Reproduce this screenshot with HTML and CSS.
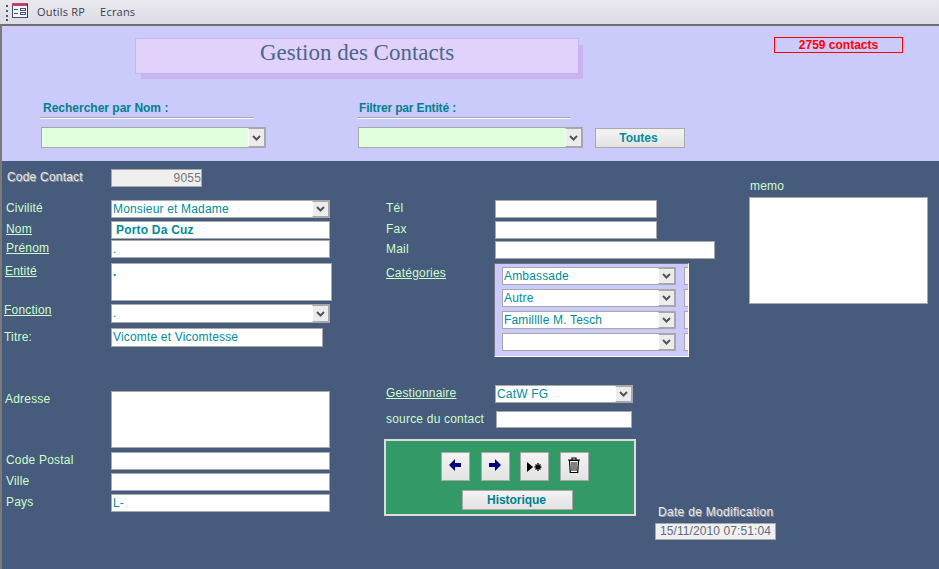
FILE: index.html
```html
<!DOCTYPE html>
<html lang="fr">
<head>
<meta charset="utf-8">
<title>Gestion des Contacts</title>
<link rel="stylesheet" href="styles.css">
</head>
<body>
<div class="menubar">
  <svg class="grip" width="3" height="17" viewBox="0 0 3 17"><rect x="0" y="1" width="2" height="2" fill="#555"/><rect x="0" y="6" width="2" height="2" fill="#555"/><rect x="0" y="11" width="2" height="2" fill="#555"/><rect x="0" y="15" width="2" height="2" fill="#555"/></svg>
  <svg class="formicon" width="16" height="15" viewBox="0 0 16 15"><rect x="0.500" y="0.500" width="15" height="14" fill="#f4f6fb" stroke="#3c4f78"/><rect x="0" y="0" width="16" height="3" fill="#c0406e"/><rect x="2" y="6" width="4" height="1" fill="#44557c"/><rect x="2" y="10" width="4" height="1" fill="#44557c"/><rect x="8.500" y="5.500" width="5" height="2" fill="#fff" stroke="#44557c"/><rect x="8.500" y="9.500" width="5" height="2" fill="#fff" stroke="#44557c"/><rect x="15" y="1" width="1" height="14" fill="#2c3a5c"/></svg>
  <span class="menu-item first">Outils RP</span>
  <span class="menu-item">Ecrans</span>
</div>
<main class="form">
  <header class="head">
    <div class="head-top">
      <div class="title">Gestion des Contacts</div>
      <div class="counter">2759 contacts</div>
    </div>
    <div class="search-row">
      <div class="search">
        <div class="search-label">Rechercher par Nom :</div>
        <div class="rule"></div>
        <div class="combo green w225"><span class="val"></span><span class="arrow"><svg width="9" height="6" viewBox="0 0 9 6"><path d="M1 1l3.500 3.500L8 1" fill="none" stroke="#555" stroke-width="2"/></svg></span></div>
      </div>
      <div class="search">
        <div class="search-label tight">Filtrer par Entité :</div>
        <div class="rule"></div>
        <div class="search-line">
          <div class="combo green w225"><span class="val"></span><span class="arrow"><svg width="9" height="6" viewBox="0 0 9 6"><path d="M1 1l3.500 3.500L8 1" fill="none" stroke="#555" stroke-width="2"/></svg></span></div>
          <div class="btn toutes">Toutes</div>
        </div>
      </div>
    </div>
  </header>
  <section class="body">
    <div class="col-left">
      <div class="field"><span class="lab engr p5">Code Contact</span><div class="box locked w91 h18">9055</div></div>
      <div class="field mt13"><span class="lab p4">Civilité</span><div class="combo w219 h18"><span class="val">Monsieur et Madame</span><span class="arrow"><svg width="9" height="6" viewBox="0 0 9 6"><path d="M1 1l3.500 3.500L8 1" fill="none" stroke="#555" stroke-width="2"/></svg></span></div></div>
      <div class="field mt3"><span class="lab link p4">Nom</span><div class="box strong w219 h18">Porto Da Cuz</div></div>
      <div class="field mt1"><span class="lab link p4">Prénom</span><div class="box w219 h18">.</div></div>
      <div class="field mt5"><span class="lab link p3">Entité</span><div class="box dot w221 h38">.</div></div>
      <div class="field mt3"><span class="lab link p2 up2">Fonction</span><div class="combo w219 h19"><span class="val">.</span><span class="arrow"><svg width="9" height="6" viewBox="0 0 9 6"><path d="M1 1l3.500 3.500L8 1" fill="none" stroke="#555" stroke-width="2"/></svg></span></div></div>
      <div class="field mt5"><span class="lab p2 tp2">Titre:</span><div class="box w212 h19">Vicomte et Vicomtesse</div></div>
      <div class="field mt44"><span class="lab p3">Adresse</span><div class="box w219 h57"></div></div>
      <div class="field mt4"><span class="lab p4">Code Postal</span><div class="box w219 h18"></div></div>
      <div class="field mt3"><span class="lab p4">Ville</span><div class="box w219 h18"></div></div>
      <div class="field mt3"><span class="lab p4">Pays</span><div class="box w219 h18">L-</div></div>
    </div>
    <div class="col-mid">
      <div class="field mid"><span class="lab p2">Tél</span><div class="box w162 h18"></div></div>
      <div class="field mid mt3"><span class="lab p2">Fax</span><div class="box w162 h18"></div></div>
      <div class="field mid mt2"><span class="lab p2">Mail</span><div class="box w220 h18"></div></div>
      <div class="field mid mt4">
        <span class="lab link p2 tp3">Catégories</span>
        <div class="subform">
          <div class="sub-row"><div class="combo w174 h18"><span class="val">Ambassade</span><span class="arrow"><svg width="9" height="6" viewBox="0 0 9 6"><path d="M1 1l3.500 3.500L8 1" fill="none" stroke="#555" stroke-width="2"/></svg></span></div><span class="sliver"></span></div>
          <div class="sub-row"><div class="combo w174 h18"><span class="val">Autre</span><span class="arrow"><svg width="9" height="6" viewBox="0 0 9 6"><path d="M1 1l3.500 3.500L8 1" fill="none" stroke="#555" stroke-width="2"/></svg></span></div><span class="sliver"></span></div>
          <div class="sub-row"><div class="combo w174 h18"><span class="val">Familllle M. Tesch</span><span class="arrow"><svg width="9" height="6" viewBox="0 0 9 6"><path d="M1 1l3.500 3.500L8 1" fill="none" stroke="#555" stroke-width="2"/></svg></span></div><span class="sliver"></span></div>
          <div class="sub-row"><div class="combo w174 h18"><span class="val"></span><span class="arrow"><svg width="9" height="6" viewBox="0 0 9 6"><path d="M1 1l3.500 3.500L8 1" fill="none" stroke="#555" stroke-width="2"/></svg></span></div><span class="sliver"></span></div>
        </div>
      </div>
      <div class="field mid mt28"><span class="lab link p2">Gestionnaire</span><div class="combo w138 h18"><span class="val">CatW FG</span><span class="arrow"><svg width="9" height="6" viewBox="0 0 9 6"><path d="M1 1l3.500 3.500L8 1" fill="none" stroke="#555" stroke-width="2"/></svg></span></div></div>
      <div class="field mid mt8"><span class="lab p2 nowrap">source du contact</span><div class="box shift w136 h17"></div></div>
      <div class="bottom-row">
        <div class="navbox">
          <div class="nav-buttons">
            <div class="btn square"><svg class="nudge" width="12" height="12" viewBox="0 0 12 12"><path d="M0 6L6 0v4h6v4H6v4z" fill="#000080"/></svg></div>
            <div class="btn square gap11"><svg class="nudge" width="12" height="12" viewBox="0 0 12 12"><path d="M12 6L6 0v4H0v4h6v4z" fill="#000080"/></svg></div>
            <div class="btn square gap10"><svg width="15" height="10" viewBox="0 0 15 10"><path d="M0 0l6 5-6 5z" fill="#000"/><path d="M11 1v8M7.500 5h7M8.500 2.500l5 5M13.500 2.500l-5 5" stroke="#000" stroke-width="1.300" fill="none"/></svg></div>
            <div class="btn square gap11"><svg class="nudge" width="12" height="16" viewBox="0 0 12 16"><path d="M0 3h12M4 3V1h4v2" fill="none" stroke="#000" stroke-width="1.200"/><path d="M1.500 3.500l.8 12h7.400l.8-12z" fill="#fff" stroke="#000" stroke-width="1.200"/><path d="M4 5v9M6 5v9M8 5v9" stroke="#000" stroke-width="1"/></svg></div>
          </div>
          <div class="btn historique">Historique</div>
        </div>
        <div class="datemod">
          <div class="engr date-label">Date de Modification</div>
          <div class="date-val">15/11/2010 07:51:04</div>
        </div>
      </div>
    </div>
    <div class="col-right">
      <div class="lab memo-label">memo</div>
      <div class="box w179 h107"></div>
    </div>
  </section>
</main>
</body>
</html>
```
FILE: styles.css
```css
* { box-sizing: border-box; }
html, body { margin: 0; padding: 0; }
body {
  width: 939px;
  height: 569px;
  overflow: hidden;
  font-family: "Liberation Sans", Arial, sans-serif;
  font-size: 12px;
  line-height: 14px;
  background: #475b7c;
}
.menubar {
  height: 24px;
  display: flex;
  align-items: center;
  padding-left: 6px;
  background: linear-gradient(#e9e9ee, #dcdce6);
  color: #3c3c50;
  font-family: "Open Sans", sans-serif;
  font-size: 11px;
  letter-spacing: .2px;
}
.grip { margin-right: 3px; }
.formicon { margin-right: 9px; margin-top: -4px; }
.menu-item { margin-left: 15px; }
.menu-item.first { margin-left: 0; }
.form {
  height: 545px;
  border-top: 2px solid #6f6f6f;
  border-left: 2px solid #7a7a7a;
  display: flex;
  flex-direction: column;
}
.head {
  height: 135px;
  background: #cbcbfb;
  padding-top: 11px;
}
.head-top { display: flex; align-items: flex-start; margin-left: 133px; }
.title {
  flex: none;
  width: 444px;
  height: 36px;
  margin-top: 1px;
  padding-top: 1px;
  background: #e0d2fa;
  border: 1px solid #c8b4f0;
  box-shadow: 5px 6px 0 -1px #c8b4f0;
  text-align: center;
  font-family: "Liberation Serif", serif;
  font-size: 23px;
  line-height: 26px;
  color: #4d6690;
}
.counter {
  flex: none;
  width: 129px;
  height: 16px;
  margin-left: 195px;
  border: 1px solid #f00;
  color: #f00;
  font-weight: bold;
  text-align: center;
  line-height: 15px;
}
.search-row { display: flex; margin: 27px 0 0 38px; }
.search { flex: none; width: 317px; }
.search-label { padding-left: 3px; margin-bottom: 2px; font-weight: bold; color: #00808f; }
.search-label.tight { padding-left: 2px; letter-spacing: -.15px; }
.rule { width: 214px; height: 2px; background: #a8a8a8; border-bottom: 1px solid #fff; margin-bottom: 8px; }
.search .combo { margin-left: 1px; }
.search-line { display: flex; align-items: flex-start; }
.btn {
  flex: none;
  display: flex;
  align-items: center;
  justify-content: center;
  background: linear-gradient(#f3f3f3, #e3e3e3);
  border: 1px solid #a8a8a8;
  font-weight: bold;
  color: #00808f;
}
.toutes { width: 90px; height: 20px; margin: 1px 0 0 12px; padding-right: 3px; color: #008e9b; }
.combo {
  flex: none;
  display: flex;
  height: 21px;
  background: #fff;
  border: 1px solid #a8a8a8;
  color: #008c98;
  letter-spacing: .17px;
}
.combo.green { background: #e0ffdc; }
.val { flex: 1; padding: 1px 0 0 1px; line-height: 15px; white-space: nowrap; overflow: hidden; }
.arrow {
  width: 17px;
  display: flex;
  align-items: center;
  justify-content: center;
  background: #ececec;
  border: 1px solid #a8a8a8;
  border-left-color: #fff;
  box-shadow: 1px 0 0 #a8a8a8;
}
.box {
  background: #fff;
  border: 1px solid #a8a8a8;
  color: #008c98;
  padding: 1px 0 0 1px;
  letter-spacing: .17px;
  line-height: 15px;
  white-space: nowrap;
}
.locked { background: #efefef; color: #777; text-align: right; }
.strong { font-weight: bold; padding-left: 4px; letter-spacing: .2px; }
.dot { font-weight: bold; }
.shift { margin-left: 1px; }
.w91 { width: 91px; } .w136 { width: 136px; } .w138 { width: 138px; } .w162 { width: 162px; }
.w174 { width: 174px; } .w179 { width: 179px; } .w212 { width: 212px; } .w219 { width: 219px; }
.w220 { width: 220px; } .w221 { width: 221px; } .w225 { width: 225px; }
.h17 { height: 17px; } .h18 { height: 18px; } .h19 { height: 19px; } .h38 { height: 38px; }
.h57 { height: 57px; } .h107 { height: 107px; }
.body { flex: 1; display: flex; background: #475b7c; }
.col-left { flex: none; width: 382px; padding-top: 8px; }
.col-mid { flex: none; width: 365px; padding-top: 39px; }
.col-right { flex: none; padding-top: 18px; }
.field { display: grid; grid-template-columns: 109px auto; justify-content: start; align-items: start; }
.field.mid { grid-template-columns: 111px auto; }
.mt1 { margin-top: 1px; } .mt2 { margin-top: 2px; } .mt3 { margin-top: 3px; } .mt4 { margin-top: 4px; }
.mt5 { margin-top: 5px; } .mt8 { margin-top: 8px; } .mt13 { margin-top: 13px; } .mt28 { margin-top: 28px; }
.mt44 { margin-top: 44px; }
.lab { color: #ccffcc; padding-top: 1px; letter-spacing: .2px; }
.link { text-decoration: underline; }
.p2 { padding-left: 2px; } .p3 { padding-left: 3px; } .p4 { padding-left: 4px; } .p5 { padding-left: 5px; }
.tp2 { padding-top: 2px; } .tp3 { padding-top: 3px; }
.up2 { margin-top: -1px; padding-top: 0; }
.nowrap { white-space: nowrap; }
.engr { color: #e8e8e8; text-shadow: 1px 1px 0 #9a9a9a; }
.subform {
  width: 195px;
  height: 94px;
  margin-left: -1px;
  padding: 3px 0 0 7px;
  background: #cbcbfb;
  border: 1px solid #fff;
  border-top-color: #777;
  border-left-color: #777;
  overflow: hidden;
}
.sub-row { display: flex; margin-bottom: 4px; }
.sliver { flex: none; width: 8px; height: 18px; margin-left: 8px; background: #f2f2f2; border: 1px solid #a8a8a8; }
.bottom-row { display: flex; margin-top: 11px; align-items: flex-start; }
.navbox {
  flex: none;
  width: 252px;
  height: 77px;
  padding: 11px 0 0 55px;
  background: #339966;
  border: 2px solid #dcdcdc;
}
.nav-buttons { display: flex; }
.square { width: 29px; height: 29px; }
.nudge { margin: -3px 1px 0 0; }
.gap10 { margin-left: 10px; }
.gap11 { margin-left: 11px; }
.historique { width: 111px; height: 20px; margin: 9px 0 0 21px; padding-right: 2px; letter-spacing: -.05px; }
.datemod { flex: none; margin: 66px 0 0 19px; }
.date-label { padding-left: 3px; margin-bottom: 4px; white-space: nowrap; letter-spacing: .3px; }
.date-val {
  width: 121px;
  height: 17px;
  background: #f0f0f0;
  border: 1px solid #a8a8a8;
  color: #5f6b80;
  text-align: center;
  letter-spacing: .1px;
  line-height: 15px;
  white-space: nowrap;
}
.memo-label { padding: 0 0 0 1px; margin-bottom: 4px; }
```
